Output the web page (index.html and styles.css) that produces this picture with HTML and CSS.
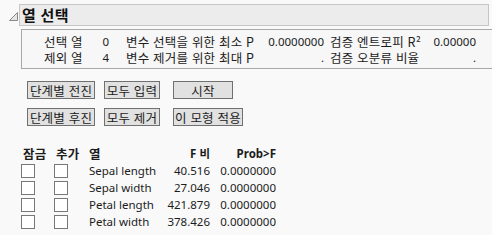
FILE: index.html
```html
<!DOCTYPE html>
<html lang="ko">
<head>
  <meta charset="UTF-8">
  <title>열 선택</title>
  <link rel="stylesheet" href="styles.css">
</head>
<body>
  <div class="outline">
    <div class="outline-head">
      <svg class="disclosure" width="12" height="12" viewBox="0 0 12 12">
        <polygon points="10.5,1.5 10.5,9.5 2.5,9.5" fill="#e4e4e4" stroke="#8a8a8a" stroke-width="1"/>
      </svg>
      <div class="title-bar">열 선택</div>
    </div>

    <div class="outline-body">
      <!-- résumé des colonnes -->
      <div class="info-box">
        <div class="info-grid">
          <span class="ko">선택 열</span><span class="num">0</span>
          <span class="ko lbl">변수 선택을 위한 최소 P</span><span class="num">0.0000000</span>
          <span class="ko lbl2">검증 엔트로피 R²</span><span class="num">0.00000</span>

          <span class="ko">제외 열</span><span class="num">4</span>
          <span class="ko lbl">변수 제거를 위한 최대 P</span><span class="num">.</span>
          <span class="ko lbl2">검증 오분류 비율</span><span class="num">.</span>
        </div>
      </div>

      <div class="buttons">
        <button class="b1">단계별 전진</button>
        <button class="b2">모두 입력</button>
        <button class="b3">시작</button>
        <button class="b1">단계별 후진</button>
        <button class="b2">모두 제거</button>
        <button class="b3">이 모형 적용</button>
      </div>

      <div class="cols">
        <span class="hd ko">잠금</span>
        <span class="hd ko">추가</span>
        <span class="hd ko">열</span>
        <span class="hd num">F 비</span>
        <span class="hd num">Prob&gt;F</span>

        <span><i class="box"></i></span><span><i class="box"></i></span>
        <span>Sepal length</span><span class="num">40.516</span><span class="num">0.0000000</span>

        <span><i class="box"></i></span><span><i class="box"></i></span>
        <span>Sepal width</span><span class="num">27.046</span><span class="num">0.0000000</span>

        <span><i class="box"></i></span><span><i class="box"></i></span>
        <span>Petal length</span><span class="num">421.879</span><span class="num">0.0000000</span>

        <span><i class="box"></i></span><span><i class="box"></i></span>
        <span>Petal width</span><span class="num">378.426</span><span class="num">0.0000000</span>
      </div>
    </div>
  </div>
</body>
</html>
```

FILE: styles.css
```css
body {
  margin: 0;
  background: #f9f9f9;
  color: #1c1c1c;
  font-family: "Noto Sans", "Noto Sans CJK KR", sans-serif;
  font-size: 11.5px;
}

.ko {
  font-family: "Noto Sans CJK KR", sans-serif;
  font-size: 12.5px;
  letter-spacing: 0.2px;
}

.outline {
  padding: 4px 3px 0 7px;
}

.outline-head {
  display: flex;
  align-items: center;
}

.disclosure {
  width: 12px;
  height: 12px;
  margin-top: 4px;
}

.title-bar {
  flex: 1;
  height: 20px;
  line-height: 20px;
  background: #ececec;
  border: 1px solid #c6c6c6;
  padding-left: 2px;
  font-family: "Noto Sans CJK KR", sans-serif;
  font-weight: bold;
  font-size: 15px;
  letter-spacing: 0.3px;
  color: #111;
}

.outline-body {
  margin-left: 14px;
}

.info-box {
  margin-top: 3px;
  width: 465px;
  border: 1px solid #a8a8a8;
  background: #f7f7f7;
  padding: 4px 0 2px 22px;
}

.info-grid {
  display: grid;
  grid-template-columns: 52px 13px 153px 62px 102px 50px;
  grid-auto-rows: 16px;
  line-height: 16px;
  white-space: nowrap;
}

.num {
  text-align: right;
}

.lbl {
  padding-left: 17px;
}

.lbl2 {
  padding-left: 6px;
}

.buttons {
  display: grid;
  grid-template-columns: 68px 56px auto;
  justify-content: start;
  column-gap: 9px;
  row-gap: 9px;
  margin: 12px 0 0 6px;
}

.buttons .b3 {
  margin-left: 4px;
  min-width: 60px;
  justify-self: start;
}

button {
  height: 18px;
  padding: 0 1px;
  font-family: "Noto Sans CJK KR", sans-serif;
  font-size: 12.5px;
  letter-spacing: 0.2px;
  line-height: 15px;
  color: #1c1c1c;
  background: #e1e1e1;
  border: 1px solid #707070;
  border-radius: 0;
  white-space: nowrap;
}

.cols {
  display: grid;
  grid-template-columns: 33px 35px 72px 49px 66px;
  grid-auto-rows: 17px;
  line-height: 17px;
  margin-top: 19px;
  white-space: nowrap;
}

.hd {
  font-weight: bold;
}

.cols .hd:first-child,
.cols .hd:nth-child(2) {
  padding-left: 2px;
}

.box {
  display: inline-block;
  width: 12px;
  height: 12px;
  border: 1px solid #777;
  background: #fff;
  vertical-align: middle;
  margin-top: -2px;
}
```
